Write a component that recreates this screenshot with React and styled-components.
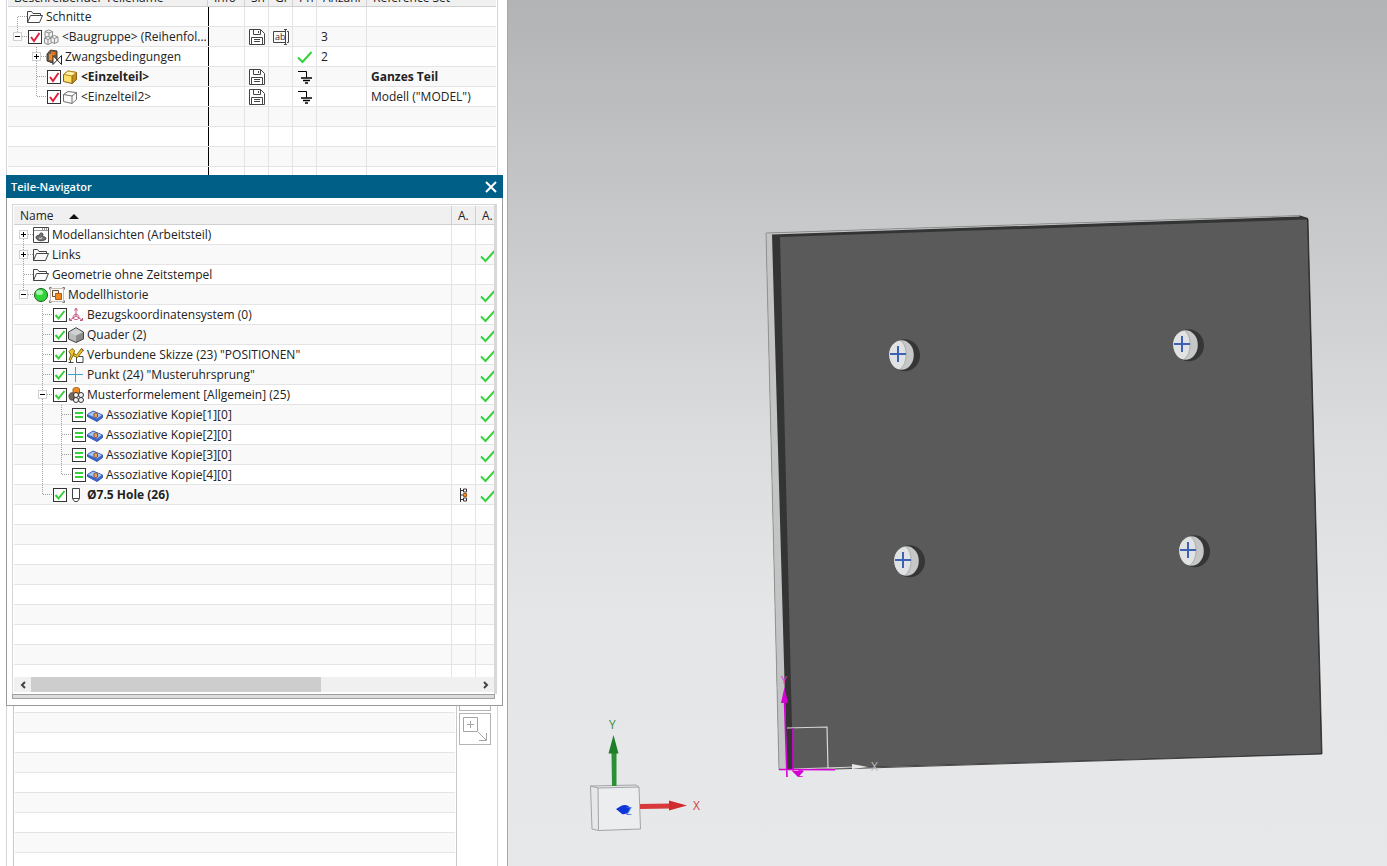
import React from "react";
import styled, { createGlobalStyle, css } from "styled-components";

const GlobalStyle = createGlobalStyle`
  * {
    box-sizing: border-box;
  }
  body {
    margin: 0;
    background: #fff;
    color: #222;
    font-family: "Open Sans", "Noto Sans", sans-serif;
    font-size: 12px;
    line-height: 16px;
  }
`;

const gridLine = "#e4e4e4";
const stripe = "#f9f9f9";
const frameLine = "#d4d6d8";

const Layout = styled.div`
  display: grid;
  grid-template-columns: 508px 1fr;
  height: 100vh;
  overflow: hidden;
`;

const Sidebar = styled.aside`
  display: flex;
  flex-direction: column;
  min-height: 0;
  overflow: hidden;
  padding: 0 4px 0 6px;
  border-right: 1px solid #a6a6a6;
`;

const AssemblyPanel = styled.section`
  flex: none;
  margin-right: 5px;
  padding: 0 1px;
  border: solid ${frameLine};
  border-width: 0 1px;
`;

const Table = styled.table`
  width: 100%;
  table-layout: fixed;
  border-collapse: separate;
  border-spacing: 0;
`;

const HeadCell = styled.th`
  height: 19px;
  padding: 2px 0 0 6px;
  overflow: hidden;
  border-right: 1px solid #d0d0d0;
  border-bottom: 1px solid #d0d0d0;
  background: #f0f0f0;
  font-weight: normal;
  text-align: left;
  white-space: nowrap;
  &:last-child {
    border-right: 0;
  }
  ${props =>
    props.$clipped &&
    css`
      height: 7px;
      padding-top: 0;
    `}
`;

const HeadLabel = styled.div`
  display: flex;
  align-items: center;
  gap: 15px;
  ${props =>
    props.$clipped &&
    css`
      align-items: flex-end;
      height: 6px;
      overflow: hidden;
    `}
`;

const Row = styled.tr`
  font-weight: ${props => (props.$bold ? "bold" : "normal")};
  &:nth-child(even) {
    background: ${stripe};
  }
`;

const Cell = styled.td`
  height: ${props => props.$height || 20}px;
  padding: 0 0 0 ${props => props.$pad || 0}px;
  overflow: hidden;
  border-right: 1px solid ${gridLine};
  border-bottom: 1px solid ${gridLine};
  white-space: nowrap;
  &:last-child {
    border-right: 0;
  }
  ${props =>
    props.$divider &&
    css`
      border-right: 0;
      box-shadow: 1px 0 0 #000;
    `}
  ${props =>
    props.$low &&
    css`
      padding-top: 2px;
    `}
  ${props =>
    props.$open &&
    css`
      border-bottom: 0;
    `}
  > svg {
    display: block;
  }
`;

const TreeLine = styled.div`
  display: flex;
  align-items: center;
  height: 19px;
`;

const ItemText = styled.span`
  padding-left: 3px;
`;

const Slot = styled.span`
  position: relative;
  flex: none;
  width: 19px;
  height: 19px;
  svg {
    display: block;
    overflow: visible;
  }
`;

const Expander = styled.button`
  position: absolute;
  left: 5px;
  top: 5px;
  width: 9px;
  height: 9px;
  padding: 0;
  border: 1px solid #d0d0d0;
  background: #fff;
`;

const CheckWrap = styled.label`
  position: relative;
  flex: none;
  width: 16px;
  height: 16px;
  svg {
    position: absolute;
    left: 0;
    top: 0;
    pointer-events: none;
  }
`;

const CheckInput = styled.input`
  appearance: none;
  display: block;
  width: 14px;
  height: 14px;
  margin: 1px;
  border: 1px solid #333;
  background: #fff;
`;

const IconBox = styled.svg`
  display: block;
  flex: none;
`;

const NavigatorPanel = styled.section`
  flex: none;
  border: 1px solid #9b9b9b;
  border-top: 0;
  background: #fff;
`;

const TitleBar = styled.header`
  display: flex;
  align-items: center;
  justify-content: space-between;
  height: 23px;
  margin: 0 -1px;
  padding: 0 4px 0 5px;
  background: #005f87;
  color: #fff;
`;

const Title = styled.h2`
  margin: 0;
  font-size: 11px;
  font-weight: 600;
  line-height: 16px;
`;

const IconButton = styled.button`
  display: flex;
  align-items: center;
  justify-content: center;
  width: 17px;
  height: 16px;
  padding: 0;
  border: 0;
  background: none;
`;

const NavigatorBody = styled.div`
  padding: 6px 5px;
`;

const TableFrame = styled.div`
  padding: 1px 0 2px 1px;
  border: 1px solid ${frameLine};
  border-right: 3px solid #d8d8d8;
  border-bottom: 0;
`;

const ScrollBar = styled.div`
  display: flex;
  align-items: center;
  height: 15px;
  background: #f0f0f0;
`;

const ScrollTrack = styled.div`
  flex: 1;
  height: 15px;
`;

const ScrollThumb = styled.div`
  width: 65%;
  height: 15px;
  background: #cdcdcd;
`;

const Splitter = styled.div`
  height: 5px;
  margin-right: 2px;
  border: 1px solid #a0a0a0;
  background: #dcdcdc;
`;

const LowerPanel = styled.section`
  display: flex;
  flex: 1;
  min-height: 0;
  margin-right: 5px;
  padding-left: 6px;
  border: solid ${frameLine};
  border-width: 0 1px;
`;

const LowerList = styled.div`
  flex: 1;
  padding: 0 1px;
  border: solid #c8c8c8;
  border-width: 0 1px;
`;

const EmptyRows = styled.div`
  height: 100%;
  background: repeating-linear-gradient(
    #fff 0 6px,
    ${gridLine} 6px 7px,
    ${stripe} 7px 26px,
    ${gridLine} 26px 27px,
    #fff 27px 40px
  );
`;

const SideTools = styled.div`
  display: flex;
  flex-direction: column;
  gap: 2px;
  width: 40px;
  padding-left: 2px;
`;

const ToolButton = styled.button`
  display: flex;
  align-items: center;
  justify-content: center;
  width: 32px;
  height: ${props => (props.$cut ? 5 : 32)}px;
  padding: 0;
  border: 1px solid #b4b4b4;
  border-top-width: ${props => (props.$cut ? 0 : 1)}px;
  background: #fff;
`;

const Viewport = styled.main`
  min-width: 0;
  background: linear-gradient(
    #b2b3b5 0%,
    #c7c8ca 25%,
    #dbdcde 50%,
    #e5e6e8 72%,
    #e7e8ea 100%
  );
`;

const Scene = styled.svg`
  display: block;
  width: 100%;
  height: 100%;
  font-family: "Open Sans", sans-serif;
`;

// shared 16px icon canvas
function Icon({ children, size = 16 }) {
  return (
    <IconBox width={size} height={size} viewBox="0 0 16 16" fill="none" aria-hidden="true">
      {children}
    </IconBox>
  );
}

const FolderIcon = () => (
  <Icon>
    <path
      d="M.5 13.500V2.500h4l1.500 2h7.500v2M.5 13.500l3-7h12l-3 7z"
      stroke="#444"
      strokeLinejoin="round"
    />
  </Icon>
);

const AssemblyIcon = () => (
  <Icon>
    <g fill="#f1f1f1" stroke="#8d8d8d" strokeLinejoin="round">
      <path d="M2 2.500 5.500 1 9.500 2.500v5L6 9 2 7.500z" />
      <path d="M2 2.500 6 4l3.500-1.500M6 4v5" />
      <path d="M1.500 9 5 7.500 8.500 9v5L5 15.500 1.500 14z" />
      <path d="M1.500 9 5 10.500 8.500 9M5 10.500v5" />
      <path d="M8 8 11.500 6.500 15 8v5l-3.500 1.500L8 13z" />
      <path d="m8 8 3.500 1.500L15 8M11.500 9.500v5" />
    </g>
  </Icon>
);

const ConstraintIcon = () => (
  <Icon>
    <path d="M1 5 4.500 1 11 2v8l-4 4-6-2z" fill="#6a5a4c" stroke="#4b3a2c" />
    <path d="M3 5h5v7l-5-1z" fill="#f08a24" />
    <path d="M5 2.500 9.500 3v3L5 5z" fill="#e8741a" />
    <path d="M7 6.500v9l8.500-9v9z" fill="#fff" stroke="#222" />
  </Icon>
);

const YellowCubeIcon = () => (
  <Icon>
    <path d="M1.500 5.500 6 2l8.500 1.500v7L10 14.500l-8.500-2z" fill="#ffe06a" stroke="#8a6410" />
    <path d="M10 7v7.500l4.500-4v-7z" fill="#c8901c" stroke="#8a6410" />
    <path d="M1.500 5.500 10 7l4.500-3.500L6 2z" fill="#fff0a8" stroke="#b88a20" />
  </Icon>
);

const OutlineCubeIcon = () => (
  <Icon>
    <path
      d="M1.500 5.500 6 2.500l8.500 1v7L10 14.500l-8.500-2zM1.500 5.500l8.500 1.500 4.500-3.500M10 7v7.500"
      stroke="#707070"
      strokeLinejoin="round"
      fill="#fafafa"
    />
  </Icon>
);

const SaveIcon = () => (
  <Icon>
    <path d="M.5.5h11l4 4v11H.5z" stroke="#444" fill="#fff" />
    <path d="M4.500.5v5h7v-5M9.500 2v2M2.500 15.500v-7h11v7M5 10.500h6M5 12.500h6" stroke="#444" />
  </Icon>
);

const RenameIcon = () => (
  <Icon>
    <path d="M12 2.500H.5v11H12M14 2.500h1.500v11H14M11 .5h1.500v15H11M14 .5h-1.500M14 15.500h-1.500" stroke="#444" />
    <text x="2" y="11" fontSize="9" fill="#333">
      ab
    </text>
  </Icon>
);

const GroundIcon = () => (
  <Icon>
    <path d="M1 2.500h8.500v6" stroke="#000" />
    <path d="M4 9h11M6 11.500h7M8 14h3" stroke="#000" strokeWidth="1.400" />
  </Icon>
);

const TickIcon = () => (
  <Icon>
    <path d="M1 8.500l4.500 4.500L14.500 3" stroke="#34d13a" strokeWidth="2" />
  </Icon>
);

const ViewsIcon = () => (
  <Icon>
    <path d="M.5.5h15v15H.5z" fill="#fff" stroke="#444" />
    <path d="M1 3.500h14" stroke="#999" />
    <path d="M9 2h1M11 2h1M13 2h1" stroke="#222" />
    <path d="M3 11c0-2 1-3 3-2 0-3 3-4 4-2 0 2-1 2-1 3 2-1 4 0 4 2-2 2-8 3-10-1z" fill="#777" stroke="#444" />
    <path d="M6 11c1 1 3 1 3-1" stroke="#ddd" />
  </Icon>
);

const StatusIcon = () => (
  <Icon>
    <circle cx="8" cy="8" r="6.500" fill="#2fd63a" stroke="#1e5a22" />
    <ellipse cx="6.500" cy="5.500" rx="3.500" ry="2.500" fill="#a6f5a8" />
  </Icon>
);

const HistoryIcon = () => (
  <Icon>
    <path d="M1.500 1.500h13v13h-13z" stroke="#c8bcb4" fill="#fff" />
    <path d="M.5 2.500v-2h2M13.500.5h2v2M.5 13.500v2h2M13.500 15.500h2v-2" stroke="#777" />
    <path d="M3.500 3.500h6v6h-6z" fill="#f8efe8" stroke="#6a4a34" />
    <path d="M6.500 6.500h6v6h-6z" fill="#f08a1c" stroke="#b45a0c" />
  </Icon>
);

const CsysIcon = () => (
  <Icon>
    <g stroke="#c4557f">
      <path d="M8 2v7M8 9 2 13M8 9l6 4" />
      <path d="M6.500 3.500 8 1l1.500 2.500M1.500 11v2.500H4M14.500 11v2.500H12" />
      <path d="M5 11c0-5 6-5 6 0M5 11c1 2 5 2 6 0" />
    </g>
  </Icon>
);

const BlockIcon = () => (
  <Icon>
    <path d="M.5 5 8 .7 15.500 5v7L8 15.500.5 12z" fill="#d2d2d2" />
    <path d="M.5 5 8 8.500v7L.5 12z" fill="#bcbcbc" />
    <path d="M8 8.500 15.500 5v7L8 15.500z" fill="#8c8c8c" />
    <path d="M.5 5 8 .7 15.500 5v7L8 15.500.5 12z" stroke="#444" />
  </Icon>
);

const SketchIcon = () => (
  <Icon>
    <path d="M2.500 15.500V9M.5 15.500h5M8.500 15.500v-6h6.500v6z" stroke="#444" fill="#fff" />
    <path d="M1 4.500 4 1.500l2.500 2-1 4-3 6-1.500-1L3 8z" fill="#ecc52c" stroke="#8a6c10" />
    <path d="M6 6.500 8.500 8l5-6.500 2 1.500-6 7.500L5.500 9z" fill="#ecc52c" stroke="#8a6c10" />
    <path d="m13 1.500 2.500 2" stroke="#c03a2c" />
  </Icon>
);

const PointIcon = () => (
  <Icon>
    <path d="M7.500 0v15M0 7.500h15" stroke="#3aa5c8" />
  </Icon>
);

const PatternIcon = () => (
  <Icon>
    <path d="M1 9c0-3 3-4 5-3v7H3c-1 0-2-2-2-4z" fill="#7a6a5e" stroke="#444" />
    <path d="M5 2c1-2 6-2 6.500 0v4H5z" fill="#f08a24" stroke="#a85a14" />
    <g fill="#f4f4f4" stroke="#333">
      <circle cx="8" cy="8" r="2.500" />
      <circle cx="13" cy="8" r="2.500" />
      <circle cx="8" cy="13" r="2.500" />
      <circle cx="13" cy="13" r="2.500" />
    </g>
  </Icon>
);

const CopyIcon = () => (
  <Icon>
    <path d="M.5 7.500 6 4l9.500 4v2.500L10 14.500.5 9.500z" fill="#3a68cc" stroke="#3558a8" />
    <path d="M1 7.500 6 4.500 15 8l-5 3.500z" fill="#a4c4f6" />
    <path d="M7 7c.5-1.500 3-1.500 3.500 0v3c-1 1-3 .5-3.500-.5z" fill="#e8a468" stroke="#8a4a24" />
  </Icon>
);

const HoleIcon = () => (
  <Icon>
    <path d="M4.500 1.500h7v10L9.500 14.500h-3l-2-3zM4.500 11.500h7" stroke="#444" fill="#fff" />
  </Icon>
);

const StructureIcon = () => (
  <Icon>
    <path d="M5.500 1v14M5.500 3.500h4M5.500 8h4M5.500 12.500h4" stroke="#333" />
    <path d="M8.500 2h3v3h-3z" fill="#fff" stroke="#333" />
    <path d="M8.500 6.500h3v3h-3z" fill="#f08a24" stroke="#a85a14" />
    <path d="M8.500 11h3v3h-3z" fill="#fff" stroke="#333" />
  </Icon>
);

// one indent step of the tree: dotted connectors and an optional +/- box
function TreeSlot({ kind, label }) {
  const [lines, box] = kind.split(":");
  return (
    <Slot>
      <svg width="19" height="20" fill="none" stroke="#a0a0a0" strokeDasharray="1 1" aria-hidden="true">
        {lines.includes("u") && <path d="M9.500 0v10" />}
        {lines.includes("d") && <path d="M9.500 10v10" />}
        {lines.includes("r") && <path d="M10 9.500h9" />}
      </svg>
      {box && (
        <Expander type="button" aria-label={label}>
          <svg width="7" height="7" stroke="#000" aria-hidden="true">
            <path d={box === "plus" ? "M1 3.500h5M3.500 1v5" : "M1 3.500h5"} />
          </svg>
        </Expander>
      )}
    </Slot>
  );
}

const marks = {
  red: <path d="M4 8l3 4 5.500-8" stroke="#e0203c" strokeWidth="2" />,
  green: <path d="M3.500 8l3 3.500 6-7.500" stroke="#34d13a" strokeWidth="2" />,
  equal: <path d="M4 6h8M4 10h8" stroke="#34d13a" strokeWidth="2" />
};

function TreeCheck({ mark, label }) {
  return (
    <CheckWrap>
      <CheckInput type="checkbox" defaultChecked aria-label={label} />
      <svg width="16" height="16" fill="none" aria-hidden="true">
        {marks[mark]}
      </svg>
    </CheckWrap>
  );
}

function TreeItem({ item }) {
  const { slots, mark, status, icon: ItemIcon, text } = item;
  return (
    <TreeLine>
      {slots.map((kind, i) => (
        <TreeSlot key={i} kind={kind} label={text} />
      ))}
      {mark && <TreeCheck mark={mark} label={text} />}
      {status && <StatusIcon />}
      <ItemIcon />
      <ItemText>{text}</ItemText>
    </TreeLine>
  );
}

// slot letters: u = up, d = down, r = right
const assemblyRows = [
  { slots: ["dr"], icon: FolderIcon, text: "Schnitte" },
  { slots: ["ur:minus"], mark: "red", icon: AssemblyIcon, text: "<Baugruppe> (Reihenfol...", save: true, rename: true, count: 3 },
  { slots: ["", "udr:plus"], icon: ConstraintIcon, text: "Zwangsbedingungen", position: TickIcon, count: 2 },
  { slots: ["", "udr"], mark: "red", icon: YellowCubeIcon, text: "<Einzelteil>", save: true, position: GroundIcon, refSet: "Ganzes Teil", bold: true },
  { slots: ["", "ur"], mark: "red", icon: OutlineCubeIcon, text: "<Einzelteil2>", save: true, position: GroundIcon, refSet: 'Modell ("MODEL")' }
];

const copyRow = n => ({
  slots: ["", "ud", n === 4 ? "ur" : "udr"],
  mark: "equal",
  icon: CopyIcon,
  text: `Assoziative Kopie[${n}][0]`,
  ok: true
});

const historyRows = [
  { slots: ["dr:plus"], icon: ViewsIcon, text: "Modellansichten (Arbeitsteil)" },
  { slots: ["udr:plus"], icon: FolderIcon, text: "Links", ok: true },
  { slots: ["udr"], icon: FolderIcon, text: "Geometrie ohne Zeitstempel" },
  { slots: ["ur:minus"], status: true, icon: HistoryIcon, text: "Modellhistorie", ok: true },
  { slots: ["", "udr"], mark: "green", icon: CsysIcon, text: "Bezugskoordinatensystem (0)", ok: true },
  { slots: ["", "udr"], mark: "green", icon: BlockIcon, text: "Quader (2)", ok: true },
  { slots: ["", "udr"], mark: "green", icon: SketchIcon, text: 'Verbundene Skizze (23) "POSITIONEN"', ok: true },
  { slots: ["", "udr"], mark: "green", icon: PointIcon, text: 'Punkt (24) "Musteruhrsprung"', ok: true },
  { slots: ["", "udr:minus"], mark: "green", icon: PatternIcon, text: "Musterformelement [Allgemein] (25)", ok: true },
  copyRow(1),
  copyRow(2),
  copyRow(3),
  copyRow(4),
  { slots: ["", "ur"], mark: "green", icon: HoleIcon, text: "Ø7.5 Hole (26)", structure: true, ok: true, bold: true }
];

const assemblyHeads = ["Beschreibender Teilename", "Info", "Sn", "Gr", "Pn", "Anzahl", "Reference Set"];

function AssemblyTable() {
  return (
    <Table>
      <colgroup>
        <col width="200" />
        <col width="37" />
        <col width="24" />
        <col width="24" />
        <col width="24" />
        <col width="50" />
        <col />
      </colgroup>
      <thead>
        <tr>
          {assemblyHeads.map(head => (
            <HeadCell key={head} $clipped>
              <HeadLabel $clipped>{head}</HeadLabel>
            </HeadCell>
          ))}
        </tr>
      </thead>
      <tbody>
        {assemblyRows.map(row => (
          <Row key={row.text} $bold={row.bold}>
            <Cell $divider>
              <TreeItem item={row} />
            </Cell>
            <Cell />
            <Cell $pad={4}>{row.save && <SaveIcon />}</Cell>
            <Cell $pad={4}>{row.rename && <RenameIcon />}</Cell>
            <Cell $pad={4}>{row.position && <row.position />}</Cell>
            <Cell $pad={4}>{row.count}</Cell>
            <Cell $pad={4}>{row.refSet}</Cell>
          </Row>
        ))}
        {[20, 20, 20, 8].map((height, i) => (
          <Row key={i}>
            <Cell $divider $height={height} $open={height < 20} />
            {assemblyHeads.slice(1).map(head => (
              <Cell key={head} $height={height} $open={height < 20} />
            ))}
          </Row>
        ))}
      </tbody>
    </Table>
  );
}

function HistoryTable() {
  const empty = [...Array(8).fill(20), 12];
  return (
    <Table>
      <colgroup>
        <col />
        <col width="24" />
        <col width="18" />
      </colgroup>
      <thead>
        <tr>
          <HeadCell>
            <HeadLabel>
              Name
              <svg width="10" height="5" aria-hidden="true">
                <path d="M0 5 5 0l5 5z" fill="#111" />
              </svg>
            </HeadLabel>
          </HeadCell>
          <HeadCell>A.</HeadCell>
          <HeadCell>A.</HeadCell>
        </tr>
      </thead>
      <tbody>
        {historyRows.map(row => (
          <Row key={row.text} $bold={row.bold}>
            <Cell>
              <TreeItem item={row} />
            </Cell>
            <Cell $pad={3}>{row.structure && <StructureIcon />}</Cell>
            <Cell $pad={4} $low>
              {row.ok && <TickIcon />}
            </Cell>
          </Row>
        ))}
        {empty.map((height, i) => (
          <Row key={i}>
            <Cell $height={height} $open={height < 20} />
            <Cell $height={height} $open={height < 20} />
            <Cell $height={height} $open={height < 20} />
          </Row>
        ))}
      </tbody>
    </Table>
  );
}

function ScrollArrow({ label, d }) {
  return (
    <IconButton type="button" aria-label={label}>
      <svg width="8" height="8" fill="none" stroke="#444" strokeWidth="2" aria-hidden="true">
        <path d={d} />
      </svg>
    </IconButton>
  );
}

function Navigator() {
  return (
    <NavigatorPanel>
      <TitleBar>
        <Title>Teile-Navigator</Title>
        <IconButton type="button" aria-label="Schließen">
          <svg width="12" height="12" stroke="#fff" strokeWidth="2" aria-hidden="true">
            <path d="M1 1l10 10M11 1L1 11" />
          </svg>
        </IconButton>
      </TitleBar>
      <NavigatorBody>
        <TableFrame>
          <HistoryTable />
          <ScrollBar>
            <ScrollArrow label="Nach links" d="M6 1 3 4l3 3" />
            <ScrollTrack>
              <ScrollThumb />
            </ScrollTrack>
            <ScrollArrow label="Nach rechts" d="M2 1l3 3-3 3" />
          </ScrollBar>
        </TableFrame>
        <Splitter />
      </NavigatorBody>
    </NavigatorPanel>
  );
}

// hole drilled through the plate, placed by its pattern point
function Hole({ x, y }) {
  return (
    <g transform={`translate(${x} ${y})`}>
      <ellipse cx="6.700" cy="1.300" rx="15.300" ry="16" fill="#363636" />
      <ellipse cx="3.500" cy="1" rx="12.300" ry="14.700" fill="#c6c8c8" />
      <path d="M3-13.300C-6-12-9-5-8.800 1-8 9-4 15 2 15.300 10 10 10-8 3-13.300z" fill="#e0e2e3" />
      <path d="M3-13.300C10-8 10 10 2 15.300" fill="none" stroke="#8d8f90" strokeWidth=".6" />
      <path d="M-8 0H8M0-8V8" stroke="#3d62b4" strokeWidth="2" />
    </g>
  );
}

function ModelScene() {
  return (
    <Scene viewBox="508 0 879 866" role="img" aria-label="Modell">
      <path d="M766 233 1300 215.500 1308 218 1322 754 779 770z" fill="#343434" />
      <path d="M766 233 1298 215.500 1300 216.500 772 234.500 787 770h-8z" fill="#c3c5c5" />
      <path d="M766 233 779 770M766 233 1300 215.500" fill="none" stroke="#8b8d8e" strokeWidth=".8" />
      <path d="M780 237 1307 219.500 1321 753.500 793 769z" fill="#5a5a5a" />
      <path d="M1308 219 1322 754 835 769" fill="none" stroke="#222" strokeWidth=".8" />
      <Hole x={898} y={354} />
      <Hole x={1182} y={344} />
      <Hole x={903} y={560} />
      <Hole x={1188} y={550} />

      <path d="M787 728 827 727 828 768M793 769 856 767" fill="none" stroke="#d8d8d8" strokeWidth="1.200" />
      <path d="M852 764 868 767 852 769z" fill="#e8e8e8" />
      <text x="871" y="771" fontSize="12" fill="#b9b9b9">X</text>
      <g stroke="#d400d4" strokeWidth="1.600" fill="none">
        <path d="M784.500 700 787 777M793 728V771M779 769.500 835 769.800" />
      </g>
      <path d="M784.500 687 788 703h-7z" fill="#d400d4" />
      <path d="M792 771h12l-6 6z" fill="#d400d4" />
      <text x="781" y="684" fontSize="11" fill="#e030e0">Y</text>
      <text x="798" y="777" fontSize="9" fill="#d400d4">Z</text>

      <path d="M598 788 639 787 640.500 829 598.500 830.500z" fill="#ecedef" />
      <path
        d="M598 788 639 787 640.500 829 598.500 830.500zM598 788l-7.500-2L592 829l6.500 1.500M590.500 786 636 785l3 2"
        fill="none"
        stroke="#a2a4a6"
      />
      <path d="M611.500 753h5v33h-4.500z" fill="#2b8f33" />
      <path d="M613.500 735 618.500 753.500h-10z" fill="#1f7f29" />
      <path d="M640 804 670 803.500v5L640 809z" fill="#d8393a" />
      <path d="M669 800.500 687 805.500 669 810.500z" fill="#d02c2e" />
      <path d="M616 809l5-3c3-2 8-1 9 2 0 4-4 7-8 6z" fill="#0f35d8" />
      <text x="626" y="815" fontSize="10" fill="#4a68e0">Z</text>
      <text x="609" y="729" fontSize="12" fill="#3c8c42">Y</text>
      <text x="693" y="810" fontSize="12" fill="#cf4446">X</text>
    </Scene>
  );
}

export default function App() {
  return (
    <>
      <GlobalStyle />
      <Layout>
        <Sidebar>
          <AssemblyPanel>
            <AssemblyTable />
          </AssemblyPanel>
          <Navigator />
          <LowerPanel>
            <LowerList>
              <EmptyRows />
            </LowerList>
            <SideTools>
              <ToolButton type="button" aria-label="Ansicht" $cut />
              <ToolButton type="button" aria-label="Erweitern">
                <svg width="24" height="24" fill="none" stroke="#a4a4a4" aria-hidden="true">
                  <path d="M.5.5h14v14H.5zM4 7.500h7M7.500 4v7M15 15l8 8M23.500 16v7.500H16" />
                </svg>
              </ToolButton>
            </SideTools>
          </LowerPanel>
        </Sidebar>
        <Viewport>
          <ModelScene />
        </Viewport>
      </Layout>
    </>
  );
}
